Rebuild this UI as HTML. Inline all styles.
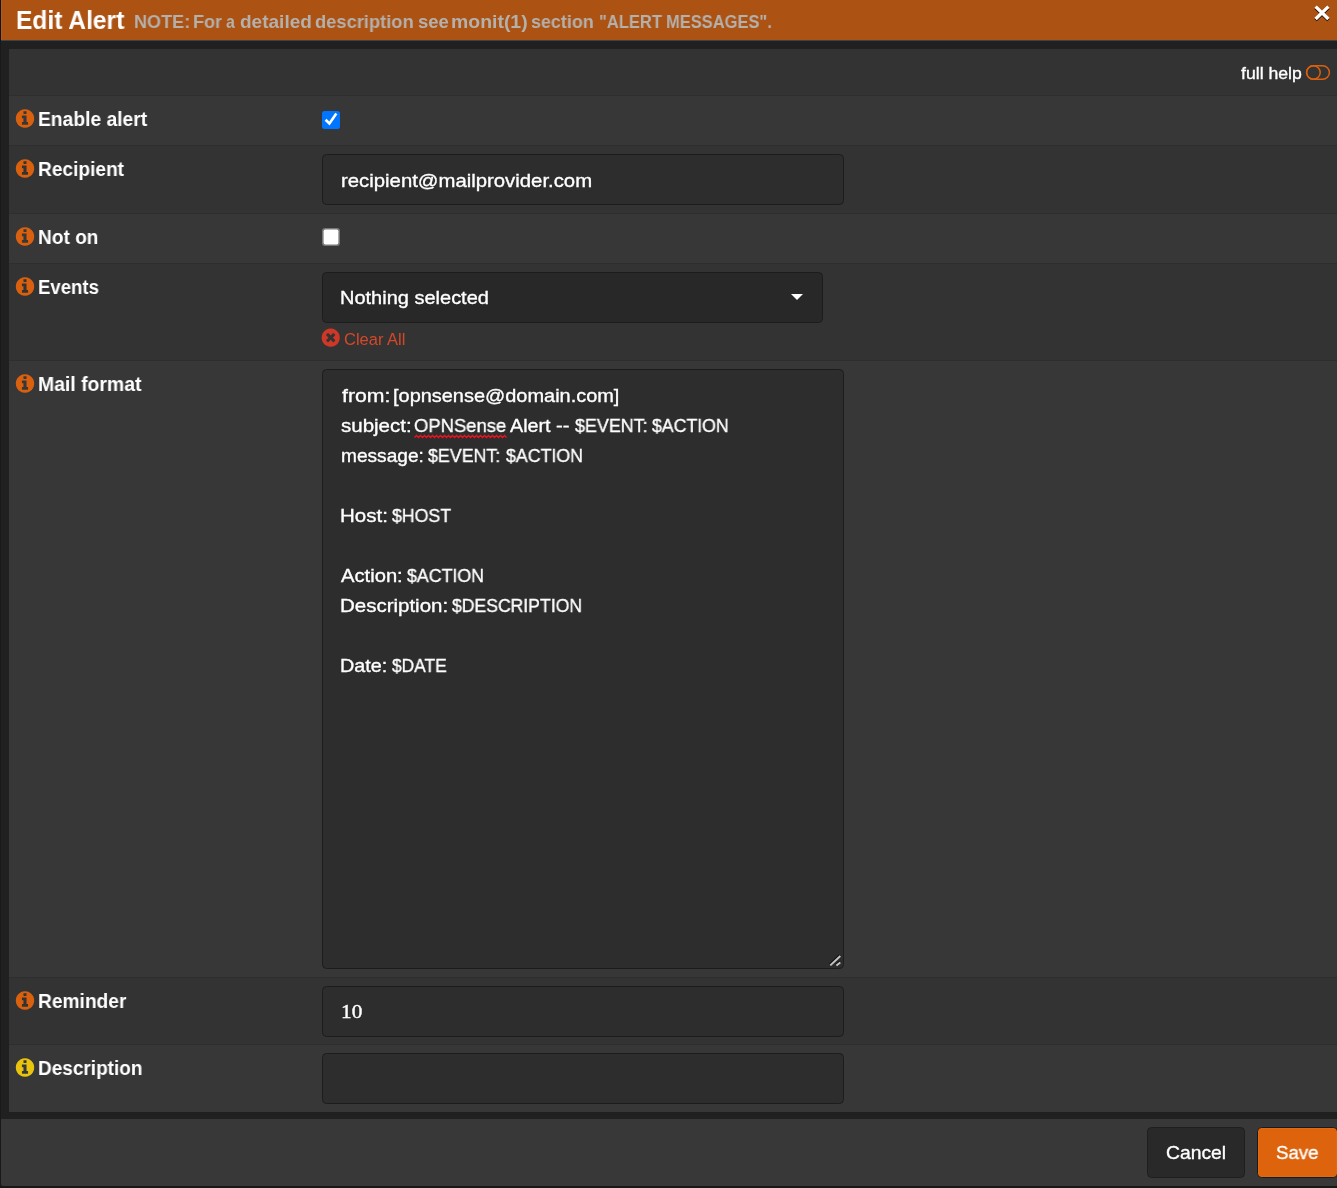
<!DOCTYPE html>
<html lang="en">
<head>
<meta charset="utf-8">
<title>Edit Alert</title>
<style>
html,body{margin:0;padding:0;}
body{width:1337px;height:1188px;position:relative;overflow:hidden;background:#202020;font-family:"Liberation Sans",sans-serif;}
.abs{position:absolute;}
.t{position:absolute;white-space:nowrap;line-height:1;transform-origin:0 0;display:block;will-change:transform;}
.row{position:absolute;left:9px;width:1328px;box-sizing:border-box;border-top:1px solid #2e2e2e;}
.odd{background:#333333;}
.even{background:#373737;}
.inp{position:absolute;box-sizing:border-box;border:1px solid #1c1c1c;border-radius:4.5px;background:#2d2d2d;}
.btn{position:absolute;box-sizing:border-box;border-radius:4.5px;}
svg{position:absolute;overflow:visible;}
</style>
</head>
<body>
<!-- outer left edge -->
<div class="abs" style="left:0;top:0;width:1px;height:41px;background:#0b151c"></div>
<div class="abs" style="left:0;top:41px;width:1px;height:1147px;background:#191919"></div>
<!-- header -->
<div class="abs" style="left:1px;top:0;width:1336px;height:40px;background:#ac5213"></div>
<div class="abs" style="left:1px;top:0;width:1px;height:40px;background:#b85a14"></div>
<div class="abs" style="left:1px;top:40px;width:1336px;height:1px;background:#3b4248"></div>
<!-- close x -->
<svg style="left:1314px;top:4px" width="16" height="19" viewBox="0 0 16 19">
  <g transform="translate(0,0.7)">
  <path d="M1.6 3.0 L14.4 15.4 M14.4 3.0 L1.6 15.4" fill="none" stroke="#000" stroke-opacity="0.85" stroke-width="3.3"/>
  <path d="M1.6 1.9 L14.4 14.3 M14.4 1.9 L1.6 14.3" fill="none" stroke="#ffffff" stroke-width="3.3"/>
  </g>
</svg>

<!-- panel rows -->
<div class="row odd"  style="top:49px;height:46px;border-top:none"></div>
<div class="row even" style="top:95px;height:50px"></div>
<div class="row odd"  style="top:145px;height:68px"></div>
<div class="row even" style="top:213px;height:50px"></div>
<div class="row odd"  style="top:263px;height:97px"></div>
<div class="row even" style="top:360px;height:617px"></div>
<div class="row odd"  style="top:977px;height:67px"></div>
<div class="row even" style="top:1044px;height:68px"></div>

<!-- footer -->
<div class="abs" style="left:1px;top:1119px;width:1336px;height:67px;background:#383838;border-bottom-left-radius:2.5px"></div>
<div class="abs" style="left:0;top:1186px;width:1337px;height:2px;background:#171717"></div>

<!-- toggle icon -->
<svg style="left:1305px;top:64px" width="27" height="17" viewBox="0 0 27 17">
  <rect x="1.6" y="1.7" width="22.8" height="13.6" rx="6.8" ry="6.8" fill="none" stroke="#d9600f" stroke-width="1.5"/>
  <circle cx="8.4" cy="8.5" r="6.8" fill="none" stroke="#d9600f" stroke-width="1.5"/>
</svg>

<!-- info icons -->

<svg style="left:15px;top:109px" width="21" height="20" viewBox="0 0 21 20"><g transform="translate(0.80,0.25) scale(0.011979,0.012077) translate(-128,-128)"><path fill="#d9600f" fill-rule="evenodd" d="M1152 1376v-160q0-14-9-23t-23-9h-96v-512q0-14-9-23t-23-9h-320q-14 0-23 9t-9 23v160q0 14 9 23t23 9h96v320h-96q-14 0-23 9t-9 23v160q0 14 9 23t23 9h448q14 0 23-9t9-23zm-128-896v-160q0-14-9-23t-23-9h-192q-14 0-23 9t-9 23v160q0 14 9 23t23 9h192q14 0 23-9t9-23zm640 416q0 209-103 385.500t-279.500 279.500-385.500 103-385.500-103-279.500-279.500-103-385.500 103-385.500 279.500-279.500 385.500-103 385.500 103 279.500 279.500 103 385.500z"/></g></svg>
<svg style="left:15px;top:159px" width="21" height="20" viewBox="0 0 21 20"><g transform="translate(0.80,0.25) scale(0.011979,0.012077) translate(-128,-128)"><path fill="#d9600f" fill-rule="evenodd" d="M1152 1376v-160q0-14-9-23t-23-9h-96v-512q0-14-9-23t-23-9h-320q-14 0-23 9t-9 23v160q0 14 9 23t23 9h96v320h-96q-14 0-23 9t-9 23v160q0 14 9 23t23 9h448q14 0 23-9t9-23zm-128-896v-160q0-14-9-23t-23-9h-192q-14 0-23 9t-9 23v160q0 14 9 23t23 9h192q14 0 23-9t9-23zm640 416q0 209-103 385.500t-279.500 279.500-385.500 103-385.500-103-279.500-279.500-103-385.500 103-385.500 279.500-279.500 385.500-103 385.500 103 279.500 279.500 103 385.500z"/></g></svg>
<svg style="left:15px;top:227px" width="21" height="20" viewBox="0 0 21 20"><g transform="translate(0.80,0.25) scale(0.011979,0.012077) translate(-128,-128)"><path fill="#d9600f" fill-rule="evenodd" d="M1152 1376v-160q0-14-9-23t-23-9h-96v-512q0-14-9-23t-23-9h-320q-14 0-23 9t-9 23v160q0 14 9 23t23 9h96v320h-96q-14 0-23 9t-9 23v160q0 14 9 23t23 9h448q14 0 23-9t9-23zm-128-896v-160q0-14-9-23t-23-9h-192q-14 0-23 9t-9 23v160q0 14 9 23t23 9h192q14 0 23-9t9-23zm640 416q0 209-103 385.500t-279.500 279.500-385.500 103-385.500-103-279.500-279.500-103-385.500 103-385.500 279.500-279.500 385.500-103 385.500 103 279.500 279.500 103 385.500z"/></g></svg>
<svg style="left:15px;top:277px" width="21" height="20" viewBox="0 0 21 20"><g transform="translate(0.80,0.25) scale(0.011979,0.012077) translate(-128,-128)"><path fill="#d9600f" fill-rule="evenodd" d="M1152 1376v-160q0-14-9-23t-23-9h-96v-512q0-14-9-23t-23-9h-320q-14 0-23 9t-9 23v160q0 14 9 23t23 9h96v320h-96q-14 0-23 9t-9 23v160q0 14 9 23t23 9h448q14 0 23-9t9-23zm-128-896v-160q0-14-9-23t-23-9h-192q-14 0-23 9t-9 23v160q0 14 9 23t23 9h192q14 0 23-9t9-23zm640 416q0 209-103 385.500t-279.500 279.500-385.500 103-385.500-103-279.500-279.500-103-385.500 103-385.500 279.500-279.500 385.500-103 385.500 103 279.500 279.500 103 385.500z"/></g></svg>
<svg style="left:15px;top:374px" width="21" height="20" viewBox="0 0 21 20"><g transform="translate(0.80,0.25) scale(0.011979,0.012077) translate(-128,-128)"><path fill="#d9600f" fill-rule="evenodd" d="M1152 1376v-160q0-14-9-23t-23-9h-96v-512q0-14-9-23t-23-9h-320q-14 0-23 9t-9 23v160q0 14 9 23t23 9h96v320h-96q-14 0-23 9t-9 23v160q0 14 9 23t23 9h448q14 0 23-9t9-23zm-128-896v-160q0-14-9-23t-23-9h-192q-14 0-23 9t-9 23v160q0 14 9 23t23 9h192q14 0 23-9t9-23zm640 416q0 209-103 385.500t-279.500 279.500-385.500 103-385.500-103-279.500-279.500-103-385.500 103-385.500 279.500-279.500 385.500-103 385.500 103 279.500 279.500 103 385.500z"/></g></svg>
<svg style="left:15px;top:991px" width="21" height="20" viewBox="0 0 21 20"><g transform="translate(0.80,0.25) scale(0.011979,0.012077) translate(-128,-128)"><path fill="#d9600f" fill-rule="evenodd" d="M1152 1376v-160q0-14-9-23t-23-9h-96v-512q0-14-9-23t-23-9h-320q-14 0-23 9t-9 23v160q0 14 9 23t23 9h96v320h-96q-14 0-23 9t-9 23v160q0 14 9 23t23 9h448q14 0 23-9t9-23zm-128-896v-160q0-14-9-23t-23-9h-192q-14 0-23 9t-9 23v160q0 14 9 23t23 9h192q14 0 23-9t9-23zm640 416q0 209-103 385.500t-279.500 279.500-385.500 103-385.500-103-279.500-279.500-103-385.500 103-385.500 279.500-279.500 385.500-103 385.500 103 279.500 279.500 103 385.500z"/></g></svg>
<svg style="left:15px;top:1058px" width="21" height="20" viewBox="0 0 21 20"><g transform="translate(0.80,0.25) scale(0.011979,0.012077) translate(-128,-128)"><path fill="#e8c40f" fill-rule="evenodd" d="M1152 1376v-160q0-14-9-23t-23-9h-96v-512q0-14-9-23t-23-9h-320q-14 0-23 9t-9 23v160q0 14 9 23t23 9h96v320h-96q-14 0-23 9t-9 23v160q0 14 9 23t23 9h448q14 0 23-9t9-23zm-128-896v-160q0-14-9-23t-23-9h-192q-14 0-23 9t-9 23v160q0 14 9 23t23 9h192q14 0 23-9t9-23zm640 416q0 209-103 385.500t-279.500 279.500-385.500 103-385.500-103-279.500-279.500-103-385.500 103-385.500 279.500-279.500 385.500-103 385.500 103 279.500 279.500 103 385.500z"/></g></svg>
<!-- controls -->
<!-- checked checkbox -->
<div class="abs" style="left:322px;top:111px;width:18px;height:18px;border-radius:2.5px;background:#0075ff"></div>
<svg style="left:322px;top:111px" width="18" height="18" viewBox="0 0 18 18"><path d="M3.6 8.75 L7.4 12.45 L14.35 2.55" fill="none" stroke="#fff" stroke-width="2.6"/></svg>
<!-- unchecked checkbox -->
<svg style="left:322px;top:228px" width="18" height="18" viewBox="0 0 18 18"><rect x="0" y="0" width="18" height="18" rx="3" fill="#767676"/><rect x="1.6" y="1.6" width="14.8" height="14.8" rx="1.6" fill="#ffffff"/></svg>

<div class="inp" style="left:322px;top:154px;width:522px;height:51px"></div>
<div class="inp" style="left:322px;top:272px;width:501px;height:51px;background:#282828"></div>
<div class="abs" style="left:791px;top:294px;width:0;height:0;border-left:6px solid transparent;border-right:6px solid transparent;border-top:6px solid #fff"></div>
<svg style="left:321px;top:328px" width="20" height="20" viewBox="0 0 20 20"><g transform="translate(0.60,0.55) scale(0.011849,0.011849) translate(-128,-128)"><path fill="#cf3826" fill-rule="evenodd" d="M1277 1122q0-26-19-45l-181-181 181-181q19-19 19-45 0-27-19-46l-90-90q-19-19-46-19-26 0-45 19l-181 181-181-181q-19-19-45-19-27 0-46 19l-90 90q-19 19-19 46 0 26 19 45l181 181-181 181q-19 19-19 45 0 27 19 46l90 90q19 19 46 19 26 0 45-19l181-181 181 181q19 19 45 19 27 0 46-19l90-90q19-19 19-46zm387-226q0 209-103 385.500t-279.500 279.500-385.500 103-385.500-103-279.500-279.500-103-385.500 103-385.500 279.500-279.500 385.500-103 385.500 103 279.500 279.500 103 385.500z"/></g></svg>
<div class="inp" style="left:322px;top:369px;width:522px;height:600px"></div>
<!-- resize grip -->
<svg style="left:826px;top:951px" width="16" height="16" viewBox="0 0 16 16">
  <path d="M3.6 13.4 L13.6 4.0 M9.8 13.6 L13.6 10.4" stroke="#141414" stroke-width="1.8" fill="none"/>
  <path d="M4.3 14.4 L14.3 5.0 M10.4 14.6 L14.3 11.4" stroke="#c6c6c6" stroke-width="1.9" fill="none"/>
</svg>
<!-- spellcheck squiggle -->
<svg style="left:414px;top:434px" width="93" height="5" viewBox="-0.5 0 93 5"><path d="M0 3.5 L2 1.5 L4 3.5 L6 1.5 L8 3.5 L10 1.5 L12 3.5 L14 1.5 L16 3.5 L18 1.5 L20 3.5 L22 1.5 L24 3.5 L26 1.5 L28 3.5 L30 1.5 L32 3.5 L34 1.5 L36 3.5 L38 1.5 L40 3.5 L42 1.5 L44 3.5 L46 1.5 L48 3.5 L50 1.5 L52 3.5 L54 1.5 L56 3.5 L58 1.5 L60 3.5 L62 1.5 L64 3.5 L66 1.5 L68 3.5 L70 1.5 L72 3.5 L74 1.5 L76 3.5 L78 1.5 L80 3.5 L82 1.5 L84 3.5 L86 1.5 L88 3.5 L90 1.5 L92 3.5" fill="none" stroke="#f0121c" stroke-width="1.3"/></svg>
<div class="inp" style="left:322px;top:986px;width:522px;height:51px"></div>
<div class="inp" style="left:322px;top:1053px;width:522px;height:51px"></div>

<!-- buttons -->
<div class="btn" style="left:1147px;top:1127px;width:98px;height:51px;background:#292929;border:1px solid #1e1e1e"></div>
<div class="btn" style="left:1257px;top:1127px;width:81px;height:51px;background:#dd630d;border:1px solid #121c23;box-shadow:inset 0 0 0 1px #e6680e"></div>

<span class="t" style="left:15.65px;top:6.99px;font-size:26px;font-weight:700;color:#ffffff;transform:scaleX(0.9449);">Edit Alert</span>
<span class="t" style="left:134.28px;top:13.04px;font-size:18.5px;font-weight:700;color:#b4b0ac;transform:scaleX(0.9761);">NOTE:</span>
<span class="t" style="left:192.98px;top:13.04px;font-size:18.5px;font-weight:700;color:#b4b0ac;transform:scaleX(0.9770);">For</span>
<span class="t" style="left:225.87px;top:13.04px;font-size:18.5px;font-weight:700;color:#b4b0ac;transform:scaleX(0.8600);">a</span>
<span class="t" style="left:239.53px;top:13.04px;font-size:18.5px;font-weight:700;color:#b4b0ac;transform:scaleX(1.0279);">detailed</span>
<span class="t" style="left:314.86px;top:13.04px;font-size:18.5px;font-weight:700;color:#b4b0ac;transform:scaleX(0.9898);">description</span>
<span class="t" style="left:417.56px;top:13.04px;font-size:18.5px;font-weight:700;color:#b4b0ac;transform:scaleX(0.9932);">see</span>
<span class="t" style="left:450.89px;top:13.04px;font-size:18.5px;font-weight:700;color:#b4b0ac;transform:scaleX(1.0502);">monit(1)</span>
<span class="t" style="left:530.87px;top:13.04px;font-size:18.5px;font-weight:700;color:#b4b0ac;transform:scaleX(0.9683);">section</span>
<span class="t" style="left:598.58px;top:13.04px;font-size:18.5px;font-weight:700;color:#b4b0ac;transform:scaleX(0.8928);">&quot;ALERT</span>
<span class="t" style="left:666.49px;top:13.04px;font-size:18.5px;font-weight:700;color:#b4b0ac;transform:scaleX(0.8912);">MESSAGES&quot;.</span>
<span class="t" style="left:1241.40px;top:65.11px;font-size:17px;font-weight:400;color:#ffffff;-webkit-text-stroke:0.35px #ffffff;transform:scaleX(1.0379);">full help</span>
<span class="t" style="left:38.10px;top:108.77px;font-size:20px;font-weight:700;color:#ffffff;transform:scaleX(0.9625);">Enable alert</span>
<span class="t" style="left:38.11px;top:158.87px;font-size:20px;font-weight:700;color:#ffffff;transform:scaleX(0.9559);">Recipient</span>
<span class="t" style="left:38.11px;top:226.57px;font-size:20px;font-weight:700;color:#ffffff;transform:scaleX(0.9541);">Not on</span>
<span class="t" style="left:38.14px;top:276.77px;font-size:20px;font-weight:700;color:#ffffff;transform:scaleX(0.9291);">Events</span>
<span class="t" style="left:38.09px;top:373.87px;font-size:20px;font-weight:700;color:#ffffff;transform:scaleX(0.9701);">Mail format</span>
<span class="t" style="left:38.10px;top:990.77px;font-size:20px;font-weight:700;color:#ffffff;transform:scaleX(0.9587);">Reminder</span>
<span class="t" style="left:38.11px;top:1057.77px;font-size:20px;font-weight:700;color:#ffffff;transform:scaleX(0.9498);">Description</span>
<span class="t" style="left:340.63px;top:171.02px;font-size:19px;font-weight:400;color:#ffffff;-webkit-text-stroke:0.35px #ffffff;transform:scaleX(1.0698);">recipient@mailprovider.com</span>
<span class="t" style="left:340.38px;top:287.72px;font-size:19px;font-weight:400;color:#ffffff;-webkit-text-stroke:0.35px #ffffff;transform:scaleX(1.0521);">Nothing selected</span>
<span class="t" style="left:343.84px;top:331.20px;font-size:16.3px;font-weight:400;color:#d4482a;transform:scaleX(1.0128);">Clear All</span>
<span class="t" style="left:340.92px;top:1003.32px;font-size:18px;font-weight:400;color:#ffffff;-webkit-text-stroke:0.35px #ffffff;font-family:'Liberation Serif',serif;transform:scaleX(1.1815);">10</span>
<span class="t" style="left:341.60px;top:385.62px;font-size:19px;font-weight:400;color:#ffffff;-webkit-text-stroke:0.35px #ffffff;transform:scaleX(1.1186);">from:</span>
<span class="t" style="left:392.59px;top:385.62px;font-size:19px;font-weight:400;color:#ffffff;-webkit-text-stroke:0.35px #ffffff;transform:scaleX(1.0495);">[opnsense@domain.com]</span>
<span class="t" style="left:341.33px;top:415.72px;font-size:19px;font-weight:400;color:#ffffff;-webkit-text-stroke:0.35px #ffffff;transform:scaleX(1.0792);">subject:</span>
<span class="t" style="left:414.47px;top:415.72px;font-size:19px;font-weight:400;color:#ffffff;-webkit-text-stroke:0.35px #ffffff;transform:scaleX(0.9696);">OPNSense</span>
<span class="t" style="left:510.26px;top:415.72px;font-size:19px;font-weight:400;color:#ffffff;-webkit-text-stroke:0.35px #ffffff;transform:scaleX(1.0380);">Alert</span>
<span class="t" style="left:556.20px;top:415.72px;font-size:19px;font-weight:400;color:#ffffff;-webkit-text-stroke:0.35px #ffffff;transform:scaleX(1.0667);">--</span>
<span class="t" style="left:575.00px;top:415.72px;font-size:19px;font-weight:400;color:#ffffff;-webkit-text-stroke:0.35px #ffffff;transform:scaleX(0.9417);">$EVENT:</span>
<span class="t" style="left:652.10px;top:415.72px;font-size:19px;font-weight:400;color:#ffffff;-webkit-text-stroke:0.35px #ffffff;transform:scaleX(0.9321);">$ACTION</span>
<span class="t" style="left:340.59px;top:445.72px;font-size:19px;font-weight:400;color:#ffffff;-webkit-text-stroke:0.35px #ffffff;transform:scaleX(1.0063);">message:</span>
<span class="t" style="left:428.40px;top:445.72px;font-size:19px;font-weight:400;color:#ffffff;-webkit-text-stroke:0.35px #ffffff;transform:scaleX(0.9377);">$EVENT:</span>
<span class="t" style="left:505.50px;top:445.72px;font-size:19px;font-weight:400;color:#ffffff;-webkit-text-stroke:0.35px #ffffff;transform:scaleX(0.9358);">$ACTION</span>
<span class="t" style="left:340.35px;top:505.72px;font-size:19px;font-weight:400;color:#ffffff;-webkit-text-stroke:0.35px #ffffff;transform:scaleX(1.0795);">Host:</span>
<span class="t" style="left:392.20px;top:505.72px;font-size:19px;font-weight:400;color:#ffffff;-webkit-text-stroke:0.35px #ffffff;transform:scaleX(0.9328);">$HOST</span>
<span class="t" style="left:341.27px;top:565.72px;font-size:19px;font-weight:400;color:#ffffff;-webkit-text-stroke:0.35px #ffffff;transform:scaleX(1.0626);">Action:</span>
<span class="t" style="left:407.40px;top:565.72px;font-size:19px;font-weight:400;color:#ffffff;-webkit-text-stroke:0.35px #ffffff;transform:scaleX(0.9358);">$ACTION</span>
<span class="t" style="left:340.25px;top:595.82px;font-size:19px;font-weight:400;color:#ffffff;-webkit-text-stroke:0.35px #ffffff;transform:scaleX(1.0779);">Description:</span>
<span class="t" style="left:452.00px;top:595.82px;font-size:19px;font-weight:400;color:#ffffff;-webkit-text-stroke:0.35px #ffffff;transform:scaleX(0.9259);">$DESCRIPTION</span>
<span class="t" style="left:340.30px;top:655.82px;font-size:19px;font-weight:400;color:#ffffff;-webkit-text-stroke:0.35px #ffffff;transform:scaleX(1.0409);">Date:</span>
<span class="t" style="left:391.70px;top:655.82px;font-size:19px;font-weight:400;color:#ffffff;-webkit-text-stroke:0.35px #ffffff;transform:scaleX(0.9131);">$DATE</span>
<span class="t" style="left:1166.04px;top:1143.32px;font-size:19px;font-weight:400;color:#ffffff;-webkit-text-stroke:0.35px #ffffff;transform:scaleX(1.0166);">Cancel</span>
<span class="t" style="left:1275.56px;top:1143.32px;font-size:19px;font-weight:400;color:#ffffff;-webkit-text-stroke:0.35px #ffffff;transform:scaleX(0.9810);">Save</span>
</body>
</html>
